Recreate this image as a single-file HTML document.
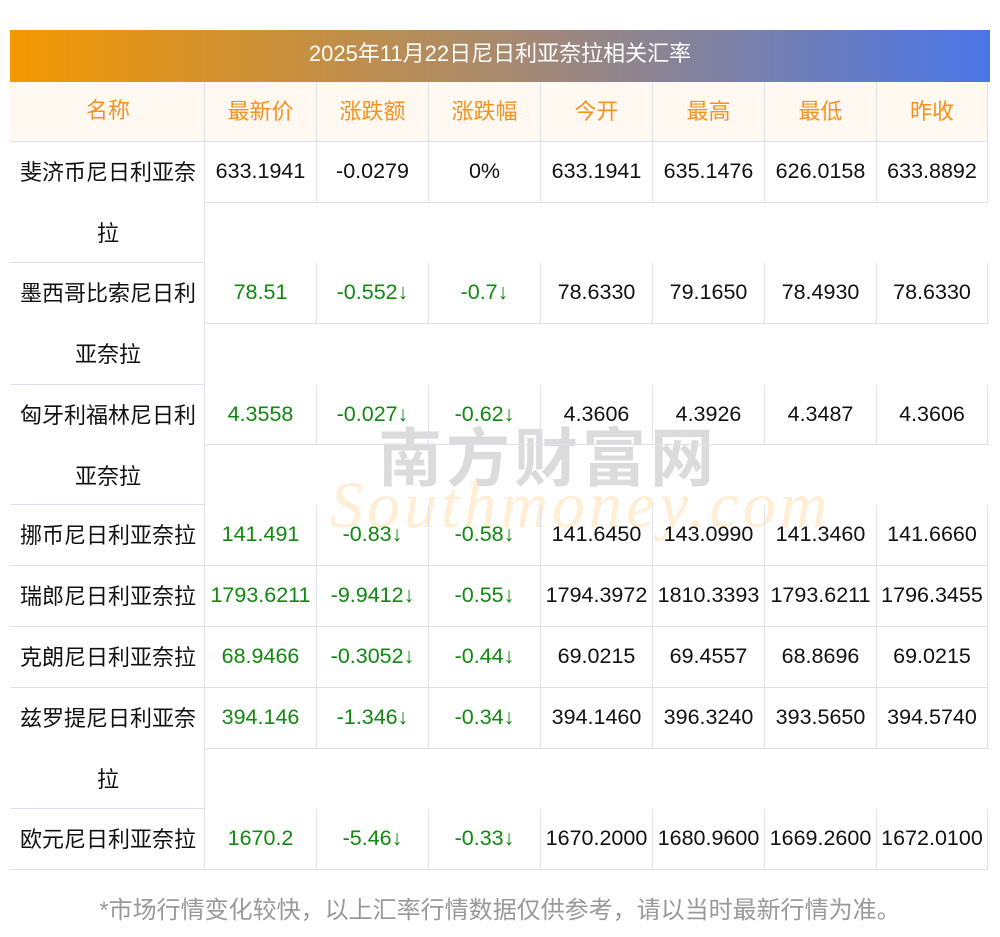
<!DOCTYPE html>
<html><head><meta charset="utf-8"><style>
body{margin:0;width:1000px;height:937px;background:#fff;position:relative;overflow:hidden;font-family:"Liberation Sans","Noto Sans CJK SC",sans-serif;}
.t{position:absolute;left:10px;top:30px;width:980px;height:52px;background:linear-gradient(90deg,#f39800,#a98a6d 50%,#4a76e8);color:#fff;font-size:22px;line-height:48px;text-align:center}
.c{position:absolute;box-sizing:border-box;border-right:1px solid #dfe1ea;border-bottom:1px solid #dfe1ea;text-align:center;font-size:21.5px;line-height:59px;color:#111;white-space:nowrap}
.h{background:#fff9f1;color:#f7901e;top:82px;height:60px;font-size:22px}
.n{left:10px;width:195px;white-space:normal;line-height:61px;padding:0 6px 0 8px;font-size:22px}
.a{left:205px;width:112px}.b{left:317px;width:112px}.d{left:429px;width:112px}.e{left:541px;width:112px}.f{left:653px;width:112px}.g{left:765px;width:112px}.k{left:877px;width:111px}
.gr{color:#11880f}
.wm1{position:absolute;left:378px;top:408px;font-size:64px;color:rgba(190,190,190,.55);letter-spacing:4px;font-weight:bold;z-index:-1}
.wm2{position:absolute;left:330px;top:468px;font-size:66px;font-style:italic;font-family:"Liberation Serif",serif;color:rgba(255,215,160,.45);letter-spacing:4px;z-index:-1}
.ft{position:absolute;top:890px;left:0;width:1000px;text-align:center;color:#999;font-size:24px}
</style></head><body>
<div class="wm1">南方财富网</div>
<div class="wm2">Southmoney.com</div>
<div class="t">2025年11月22日尼日利亚奈拉相关汇率</div>
<div class="c h n" style="line-height:58px">名称</div><div class="c h a">最新价</div><div class="c h b">涨跌额</div><div class="c h d">涨跌幅</div><div class="c h e">今开</div><div class="c h f">最高</div><div class="c h g">最低</div><div class="c h k">昨收</div>

<div class="c n" style="top:142px;height:121px">斐济币尼日利亚奈拉</div>
<div class="c a" style="top:142px;height:61px">633.1941</div><div class="c b" style="top:142px;height:61px">-0.0279</div><div class="c d" style="top:142px;height:61px">0%</div><div class="c e" style="top:142px;height:61px">633.1941</div><div class="c f" style="top:142px;height:61px">635.1476</div><div class="c g" style="top:142px;height:61px">626.0158</div><div class="c k" style="top:142px;height:61px">633.8892</div>

<div class="c n" style="top:263px;height:122px">墨西哥比索尼日利亚奈拉</div>
<div class="c a gr" style="top:263px;height:61px">78.51</div><div class="c b gr" style="top:263px;height:61px">-0.552↓</div><div class="c d gr" style="top:263px;height:61px">-0.7↓</div><div class="c e" style="top:263px;height:61px">78.6330</div><div class="c f" style="top:263px;height:61px">79.1650</div><div class="c g" style="top:263px;height:61px">78.4930</div><div class="c k" style="top:263px;height:61px">78.6330</div>

<div class="c n" style="top:385px;height:120px">匈牙利福林尼日利亚奈拉</div>
<div class="c a gr" style="top:385px;height:60px">4.3558</div><div class="c b gr" style="top:385px;height:60px">-0.027↓</div><div class="c d gr" style="top:385px;height:60px">-0.62↓</div><div class="c e" style="top:385px;height:60px">4.3606</div><div class="c f" style="top:385px;height:60px">4.3926</div><div class="c g" style="top:385px;height:60px">4.3487</div><div class="c k" style="top:385px;height:60px">4.3606</div>

<div class="c n" style="top:505px;height:61px">挪币尼日利亚奈拉</div>
<div class="c a gr" style="top:505px;height:61px">141.491</div><div class="c b gr" style="top:505px;height:61px">-0.83↓</div><div class="c d gr" style="top:505px;height:61px">-0.58↓</div><div class="c e" style="top:505px;height:61px">141.6450</div><div class="c f" style="top:505px;height:61px">143.0990</div><div class="c g" style="top:505px;height:61px">141.3460</div><div class="c k" style="top:505px;height:61px">141.6660</div>

<div class="c n" style="top:566px;height:61px">瑞郎尼日利亚奈拉</div>
<div class="c a gr" style="top:566px;height:61px">1793.6211</div><div class="c b gr" style="top:566px;height:61px">-9.9412↓</div><div class="c d gr" style="top:566px;height:61px">-0.55↓</div><div class="c e" style="top:566px;height:61px">1794.3972</div><div class="c f" style="top:566px;height:61px">1810.3393</div><div class="c g" style="top:566px;height:61px">1793.6211</div><div class="c k" style="top:566px;height:61px">1796.3455</div>

<div class="c n" style="top:627px;height:61px">克朗尼日利亚奈拉</div>
<div class="c a gr" style="top:627px;height:61px">68.9466</div><div class="c b gr" style="top:627px;height:61px">-0.3052↓</div><div class="c d gr" style="top:627px;height:61px">-0.44↓</div><div class="c e" style="top:627px;height:61px">69.0215</div><div class="c f" style="top:627px;height:61px">69.4557</div><div class="c g" style="top:627px;height:61px">68.8696</div><div class="c k" style="top:627px;height:61px">69.0215</div>

<div class="c n" style="top:688px;height:121px">兹罗提尼日利亚奈拉</div>
<div class="c a gr" style="top:688px;height:61px">394.146</div><div class="c b gr" style="top:688px;height:61px">-1.346↓</div><div class="c d gr" style="top:688px;height:61px">-0.34↓</div><div class="c e" style="top:688px;height:61px">394.1460</div><div class="c f" style="top:688px;height:61px">396.3240</div><div class="c g" style="top:688px;height:61px">393.5650</div><div class="c k" style="top:688px;height:61px">394.5740</div>

<div class="c n" style="top:809px;height:61px">欧元尼日利亚奈拉</div>
<div class="c a gr" style="top:809px;height:61px">1670.2</div><div class="c b gr" style="top:809px;height:61px">-5.46↓</div><div class="c d gr" style="top:809px;height:61px">-0.33↓</div><div class="c e" style="top:809px;height:61px">1670.2000</div><div class="c f" style="top:809px;height:61px">1680.9600</div><div class="c g" style="top:809px;height:61px">1669.2600</div><div class="c k" style="top:809px;height:61px">1672.0100</div>

<div class="ft">*市场行情变化较快，以上汇率行情数据仅供参考，请以当时最新行情为准。</div>
</body></html>
